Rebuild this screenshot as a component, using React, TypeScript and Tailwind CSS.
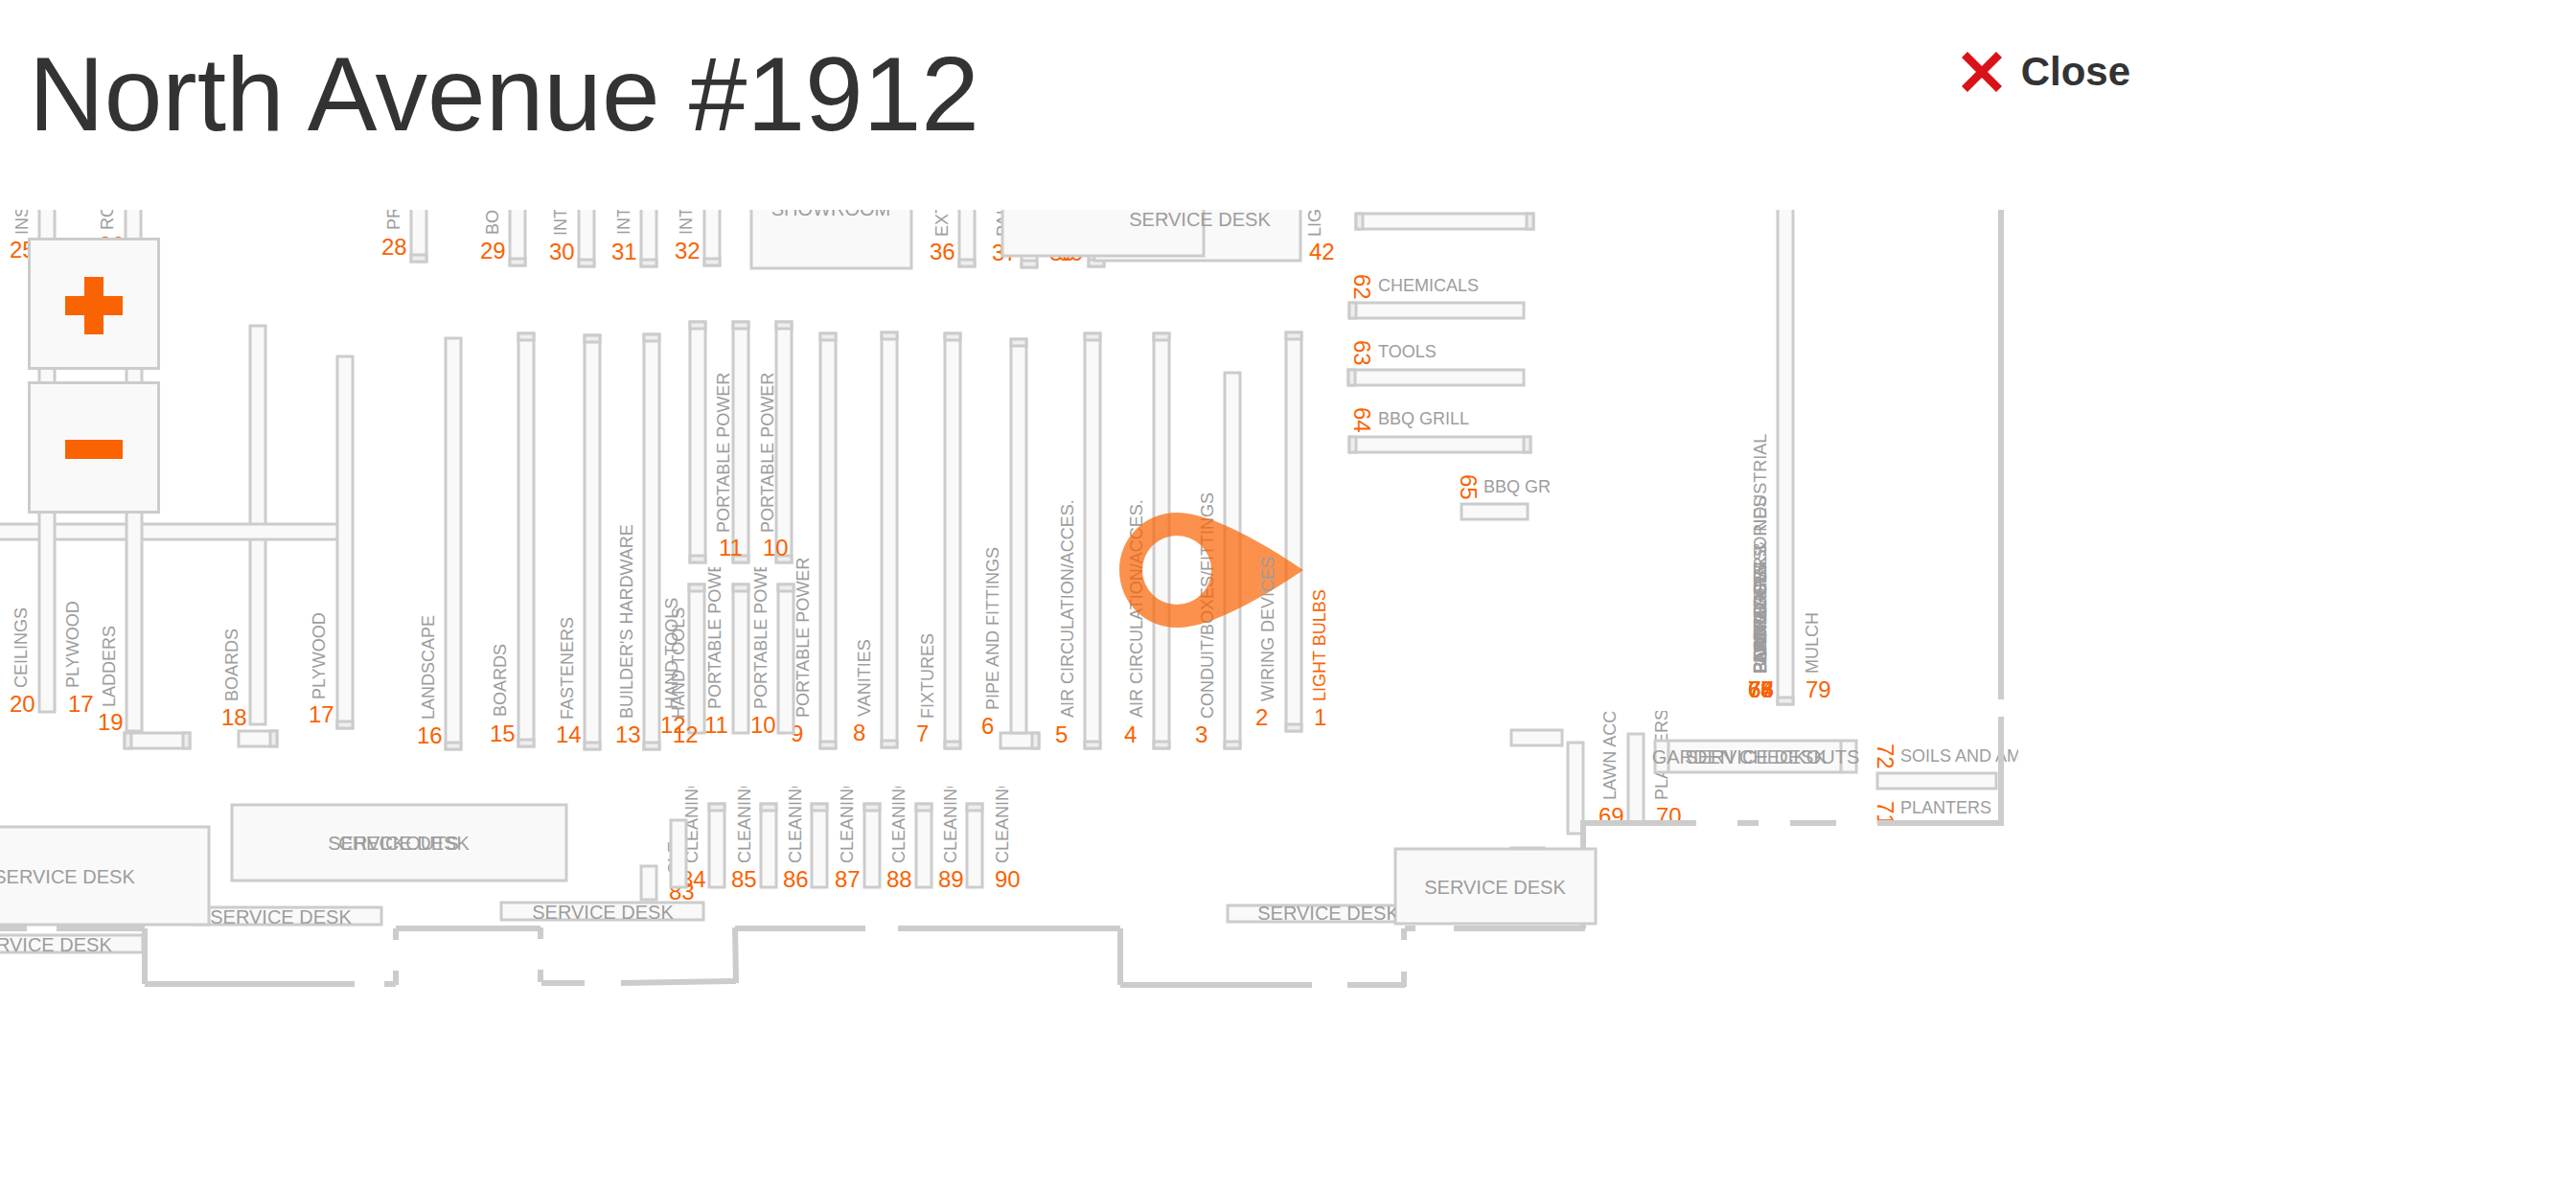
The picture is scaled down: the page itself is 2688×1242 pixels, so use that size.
import React from "react";

type Cap = "start" | "end" | "both" | "none";

/* [left, top, right, bottom, cap] outer edges of a shelf */
type Shelf = [number, number, number, number, Cap];

/* [text, x, baseline] */
type Label = [string, number, number];

const STROKE = 3;

function ShelfBox({ shelf }: { shelf: Shelf }) {
  const [l, t, r, b, cap] = shelf;
  const x = l + 2;
  const y = t + 2;
  const w = r - l - 3;
  const h = b - t - 3;
  const tall = h > w;
  const size = 7;
  const caps: React.ReactNode[] = [];
  if (cap === "start" || cap === "both") {
    caps.push(
      <rect key="s" x={x} y={y} width={tall ? w : size} height={tall ? size : h} fill="#eeeeee" />,
    );
  }
  if (cap === "end" || cap === "both") {
    caps.push(
      <rect
        key="e"
        x={tall ? x : x + w - size}
        y={tall ? y + h - size : y}
        width={tall ? w : size}
        height={tall ? size : h}
        fill="#eeeeee"
      />,
    );
  }
  return (
    <g stroke="#cccccc" strokeWidth={STROKE}>
      <rect x={x} y={y} width={w} height={h} fill="#f9f9f9" />
      {caps}
    </g>
  );
}

function Shelves({ items }: { items: Shelf[] }) {
  return (
    <>
      {items.map((s, i) => (
        <ShelfBox key={i} shelf={s} />
      ))}
    </>
  );
}

function Numbers({ items }: { items: Label[] }) {
  return (
    <g className="fill-[#f96302] text-[24px]">
      {items.map(([t, x, y], i) => (
        <text key={i} x={x} y={y}>
          {t}
        </text>
      ))}
    </g>
  );
}

function TurnedNumbers({ items }: { items: Label[] }) {
  return (
    <g className="fill-[#f96302] text-[24px]">
      {items.map(([t, x, y], i) => (
        <text key={i} transform={`translate(${x} ${y}) rotate(90)`}>
          {t}
        </text>
      ))}
    </g>
  );
}

function Uprights({ items }: { items: Label[] }) {
  return (
    <g className="text-[18px]">
      {items.map(([t, x, y], i) => (
        <text key={i} transform={`translate(${x} ${y}) rotate(-90)`}>
          {t}
        </text>
      ))}
    </g>
  );
}

function Flat({ items }: { items: Label[] }) {
  return (
    <g className="text-[18px]">
      {items.map(([t, x, y], i) => (
        <text key={i} x={x} y={y}>
          {t}
        </text>
      ))}
    </g>
  );
}

function Rooms({ items }: { items: Label[] }) {
  return (
    <g className="text-[20px]" textAnchor="middle">
      {items.map(([t, x, y], i) => (
        <text key={i} x={x} y={y}>
          {t}
        </text>
      ))}
    </g>
  );
}

const topShelves: Shelf[] = [
  [427, 150, 446, 274, "end"],
  [530, 150, 549, 278, "end"],
  [602, 150, 621, 279, "end"],
  [667, 150, 686, 279, "end"],
  [733, 150, 752, 278, "end"],
  [782, 150, 952, 281, "none"],
  [999, 150, 1018, 279, "end"],
  [1064, 150, 1083, 280, "end"],
  [1134, 150, 1153, 279, "end"],
];

const leftShelves: Shelf[] = [
  [259, 338, 278, 757, "none"],
  [-20, 545, 358, 564, "none"],
  [39, 150, 58, 744, "none"],
  [129, 150, 148, 340, "none"],
  [130, 336, 149, 764, "none"],
  [350, 370, 369, 761, "end"],
  [128, 763, 199, 782, "both"],
  [247, 761, 290, 780, "end"],
];

const mainShelves: Shelf[] = [
  [463, 351, 482, 783, "end"],
  [539, 346, 558, 780, "both"],
  [608, 348, 627, 783, "both"],
  [670, 347, 689, 783, "both"],
  [718, 334, 737, 588, "both"],
  [763, 334, 782, 588, "both"],
  [808, 334, 827, 588, "both"],
  [717, 608, 736, 766, "start"],
  [763, 608, 782, 766, "start"],
  [810, 608, 829, 766, "start"],
  [854, 346, 873, 782, "both"],
  [918, 345, 937, 781, "both"],
  [984, 346, 1003, 782, "both"],
  [1042, 763, 1085, 782, "end"],
  [1053, 352, 1072, 766, "start"],
  [1130, 346, 1149, 782, "both"],
  [1202, 346, 1221, 782, "both"],
  [1276, 387, 1295, 782, "end"],
  [1340, 345, 1359, 764, "both"],
];

const cleaningShelves: Shelf[] = [
  [667, 902, 686, 940, "none"],
  [698, 854, 717, 927, "none"],
  [738, 837, 757, 927, "start"],
  [792, 837, 811, 927, "start"],
  [845, 837, 864, 927, "start"],
  [900, 837, 919, 927, "start"],
  [954, 837, 973, 927, "start"],
  [1007, 837, 1026, 927, "start"],
];

const rightShelves: Shelf[] = [
  [1413, 221, 1601, 240, "both"],
  [1406, 314, 1591, 333, "start"],
  [1405, 384, 1591, 403, "start"],
  [1406, 454, 1598, 473, "both"],
  [1523, 524, 1595, 543, "none"],
  [1575, 760, 1631, 779, "none"],
  [1575, 883, 1612, 902, "none"],
  [1853, 150, 1872, 736, "end"],
  [1634, 773, 1653, 871, "none"],
  [1697, 764, 1716, 861, "none"],
  [1957, 805, 2084, 824, "none"],
];

const desks: Shelf[] = [
  [200, 945, 399, 966, "none"],
  [-60, 861, 219, 966, "none"],
  [-60, 974, 150, 995, "none"],
  [240, 838, 592, 920, "none"],
  [521, 940, 735, 961, "none"],
  [1279, 943, 1480, 963, "none"],
];

const stacked = [
  "COMMERCIAL & INDUSTRIAL",
  "LAWN ACCESSORIES",
  "LANDSCAPERS",
  "FERTILIZERS",
  "PLANTERS",
  "PESTICIDES",
  "BARK",
  "PAVERS",
];

function StoreMap() {
  return (
    <svg
      viewBox="0 219 2688 1023"
      className="block h-auto w-full fill-[#9d9d9d]"
      role="img"
      aria-label="Store aisle map"
    >
      <defs>
        <clipPath id="clip-power">
          <rect x="690" y="592" width="200" height="200" />
        </clipPath>
        <clipPath id="clip-cleaning">
          <rect x="690" y="821" width="400" height="140" />
        </clipPath>
        <clipPath id="clip-garden">
          <rect x="1640" y="742" width="200" height="117" />
        </clipPath>
        <clipPath id="clip-grill">
          <rect x="1500" y="480" width="118" height="60" />
        </clipPath>
        <clipPath id="clip-soils">
          <rect x="1940" y="760" width="166" height="100" />
        </clipPath>
      </defs>

      <Numbers items={[["37", 1035, 272], ["38", 1095, 272], ["39", 1104, 272]]} />
      <Uprights items={[["PAINT", 1053, 247]]} />
      <Shelves items={topShelves} />
      <Shelves
        items={[
          [1140, 150, 1358, 273, "none"],
          [1044, 150, 1257, 268, "none"],
        ]}
      />
      <Rooms items={[["SHOWROOM", 867, 225], ["SERVICE DESK", 1252, 236]]} />
      <Numbers
        items={[
          ["28", 398, 266],
          ["29", 501, 270],
          ["30", 573, 271],
          ["31", 638, 271],
          ["32", 704, 270],
          ["36", 970, 271],
          ["42", 1366, 271],
        ]}
      />
      <Uprights
        items={[
          ["PRIMER", 417, 240],
          ["BOARDS", 520, 245],
          ["INTERIOR", 591, 246],
          ["INTERIOR", 657, 245],
          ["INTERIOR", 722, 245],
          ["EXTERIOR", 989, 247],
          ["LIGHTING", 1378, 247],
        ]}
      />

      <Shelves items={leftShelves} />
      <Numbers
        items={[
          ["25", 10, 269],
          ["26", 103, 264],
          ["20", 10, 743],
          ["17", 71, 743],
          ["19", 102, 762],
          ["18", 231, 757],
          ["17", 322, 754],
        ]}
      />
      <Uprights
        items={[
          ["INSULATION", 29, 245],
          ["ROOFING", 118, 240],
          ["CEILINGS", 28, 718],
          ["PLYWOOD", 82, 718],
          ["LADDERS", 120, 738],
          ["BOARDS", 248, 732],
          ["PLYWOOD", 339, 730],
        ]}
      />

      <Numbers items={[["9", 825, 774]]} />
      <Shelves items={mainShelves} />
      <Numbers
        items={[
          ["16", 435, 776],
          ["15", 511, 774],
          ["14", 580, 775],
          ["13", 642, 775],
          ["12", 689, 765],
          ["12", 702, 775],
          ["11", 750, 580],
          ["10", 796, 580],
          ["11", 735, 765],
          ["10", 783, 765],
          ["8", 890, 773],
          ["7", 956, 774],
          ["6", 1024, 766],
          ["5", 1101, 775],
          ["4", 1173, 775],
          ["3", 1247, 775],
          ["2", 1310, 757],
          ["1", 1371, 757],
        ]}
      />
      <Uprights
        items={[
          ["LANDSCAPE", 453, 751],
          ["BOARDS", 528, 748],
          ["FASTENERS", 598, 751],
          ["BUILDER'S HARDWARE", 660, 750],
          ["HAND TOOLS", 707, 740],
          ["HAND TOOLS", 714, 750],
          ["PORTABLE POWER", 761, 556],
          ["PORTABLE POWER", 807, 556],
          ["PORTABLE POWER", 844, 749],
          ["VANITIES", 908, 748],
          ["FIXTURES", 974, 750],
          ["PIPE AND FITTINGS", 1042, 741],
          ["AIR CIRCULATION/ACCES.", 1120, 749],
          ["AIR CIRCULATION/ACCES.", 1192, 749],
          ["CONDUIT/BOXES/FITTINGS", 1266, 750],
        ]}
      />
      <g clipPath="url(#clip-power)">
        <Uprights items={[["PORTABLE POWER", 752, 740], ["PORTABLE POWER", 800, 740]]} />
      </g>

      <path
        d="M1360 595C1302 556 1257 535 1228 535C1194 535 1168 562 1168 595C1168 628 1194 655 1228 655C1257 655 1302 634 1360 595ZM1228 559A36 36 0 1 1 1228 631A36 36 0 1 1 1228 559Z"
        fill="#f96302"
        fillOpacity="0.7"
        fillRule="evenodd"
      />
      <Uprights items={[["WIRING DEVICES", 1329, 732]]} />
      <g className="fill-[#f96302]">
        <text className="text-[18px]" transform="translate(1383 732) rotate(-90)">
          LIGHT BULBS
        </text>
      </g>

      <g clipPath="url(#clip-cleaning)">
        <Uprights items={[["CLE", 710, 913], ["CLEANING", 728, 901]]} />
        <Numbers items={[["84", 710, 926]]} />
        <Numbers items={[["83", 698, 939]]} />
      </g>
      <Shelves items={cleaningShelves} />
      <g clipPath="url(#clip-cleaning)">
        <Numbers
          items={[
            ["85", 763, 926],
            ["86", 817, 926],
            ["87", 871, 926],
            ["88", 925, 926],
            ["89", 979, 926],
            ["90", 1038, 926],
          ]}
        />
        <Uprights
          items={[
            ["CLEANING", 783, 901],
            ["CLEANING", 836, 901],
            ["CLEANING", 890, 901],
            ["CLEANING", 944, 901],
            ["CLEANING", 998, 901],
            ["CLEANING", 1052, 901],
          ]}
        />
      </g>

      <Shelves items={rightShelves} />
      <TurnedNumbers
        items={[
          ["62", 1413, 286],
          ["63", 1413, 355],
          ["64", 1413, 425],
          ["65", 1524, 495],
        ]}
      />
      <Flat items={[["CHEMICALS", 1438, 304], ["TOOLS", 1438, 373], ["BBQ GRILL", 1438, 443]]} />
      <g clipPath="url(#clip-grill)">
        <Flat items={[["BBQ GRILL", 1548, 514]]} />
      </g>
      <Uprights items={stacked.map((s): Label => [s, 1843, 703])} />
      <Numbers
        items={["66", "67", "68", "73", "74", "75", "76", "78"].map((n): Label => [n, 1824, 728])}
      />
      <Numbers items={[["79", 1884, 728]]} />
      <Uprights items={[["MULCH", 1897, 703]]} />

      <g clipPath="url(#clip-garden)">
        <Numbers items={[["69", 1668, 860], ["70", 1728, 860]]} />
        <Uprights items={[["LAWN ACCESSORIES", 1686, 835], ["PLANTERS", 1740, 835]]} />
      </g>
      <Shelves items={[[1725, 771, 1938, 807, "none"]]} />
      <path d="M1741 773V806M1921 773V806" stroke="#cccccc" strokeWidth="3" />
      <Rooms items={[["GARDEN CHECKOUTS", 1832, 797], ["SERVICE DESK", 1832, 797]]} />
      <g clipPath="url(#clip-soils)">
        <TurnedNumbers items={[["72", 1959, 776], ["71", 1959, 836]]} />
        <Flat items={[["SOILS AND AMENDMENTS", 1983, 795], ["PLANTERS", 1983, 849]]} />
      </g>

      <path
        fill="none"
        stroke="#cccccc"
        strokeWidth="6"
        d="M2088 219V730M2088 748V862M1649 859H1770M1813 859H1835M1868 859H1916M1959 859H2091M1652 859V969
           M0 969H28M59 969H151M151 969V1027M151 1027H370M401 1027H413M413 1028V1013M413 981V969M413 969H564
           M564 968V980M564 1012V1025M565 1026H610M648 1026L768 1024M768 1026L767 968M767 969H903M937 969H1169
           M1169 969V1028M1169 1028H1369M1406 1028H1466M1465 1030V1014M1465 981V969M1466 969H1477M1517 969H1654"
      />
      <Shelves items={desks} />
      <Shelves items={[[1454, 884, 1666, 965, "none"]]} />
      <Rooms
        items={[
          ["SERVICE DESK", 67, 922],
          ["SERVICE DESK", 293, 964],
          ["SERVICE DESK", 43, 993],
          ["SERVICE DESK", 416, 887],
          ["CHECKOUTS", 416, 887],
          ["SERVICE DESK", 629, 959],
          ["SERVICE DESK", 1560, 933],
        ]}
      />
      <svg x="1279" y="940" width="177" height="30" viewBox="1279 940 177 30">
        <Rooms items={[["SERVICE DESK", 1386, 960]]} />
      </svg>
    </svg>
  );
}

export default function App() {
  const zoomButton =
    "flex size-[138px] items-center justify-center border-3 border-[#cccccc] bg-[#f9f9f9] pt-1";
  return (
    <div className="min-h-screen bg-white font-['Liberation_Sans',Arial,sans-serif]">
      <header className="flex h-[219px] w-full max-w-[2223px] items-start justify-between pt-11 pl-7.5 text-[#333333]">
        <h1 className="text-[109px] leading-none">North Avenue #1912</h1>
        <button type="button" className="mt-2.5 flex items-center gap-5 text-[42px] leading-none font-bold">
          <svg viewBox="0 0 42 42" className="size-[42px]" aria-hidden="true">
            <path d="M3 3L39 39M39 3L3 39" stroke="#d9121a" strokeWidth="8.5" />
          </svg>
          Close
        </button>
      </header>
      <main className="relative overflow-hidden">
        <StoreMap />
        <div className="absolute top-[29px] left-[29px] flex flex-col gap-3">
          <button type="button" aria-label="Zoom in" className={zoomButton}>
            <svg viewBox="0 0 60 60" className="size-[60px]" aria-hidden="true">
              <path d="M20 0H40V20H60V40H40V60H20V40H0V20H20Z" fill="#f96302" />
            </svg>
          </button>
          <button type="button" aria-label="Zoom out" className={zoomButton}>
            <svg viewBox="0 0 60 60" className="size-[60px]" aria-hidden="true">
              <path d="M0 20H60V40H0Z" fill="#f96302" />
            </svg>
          </button>
        </div>
      </main>
    </div>
  );
}
